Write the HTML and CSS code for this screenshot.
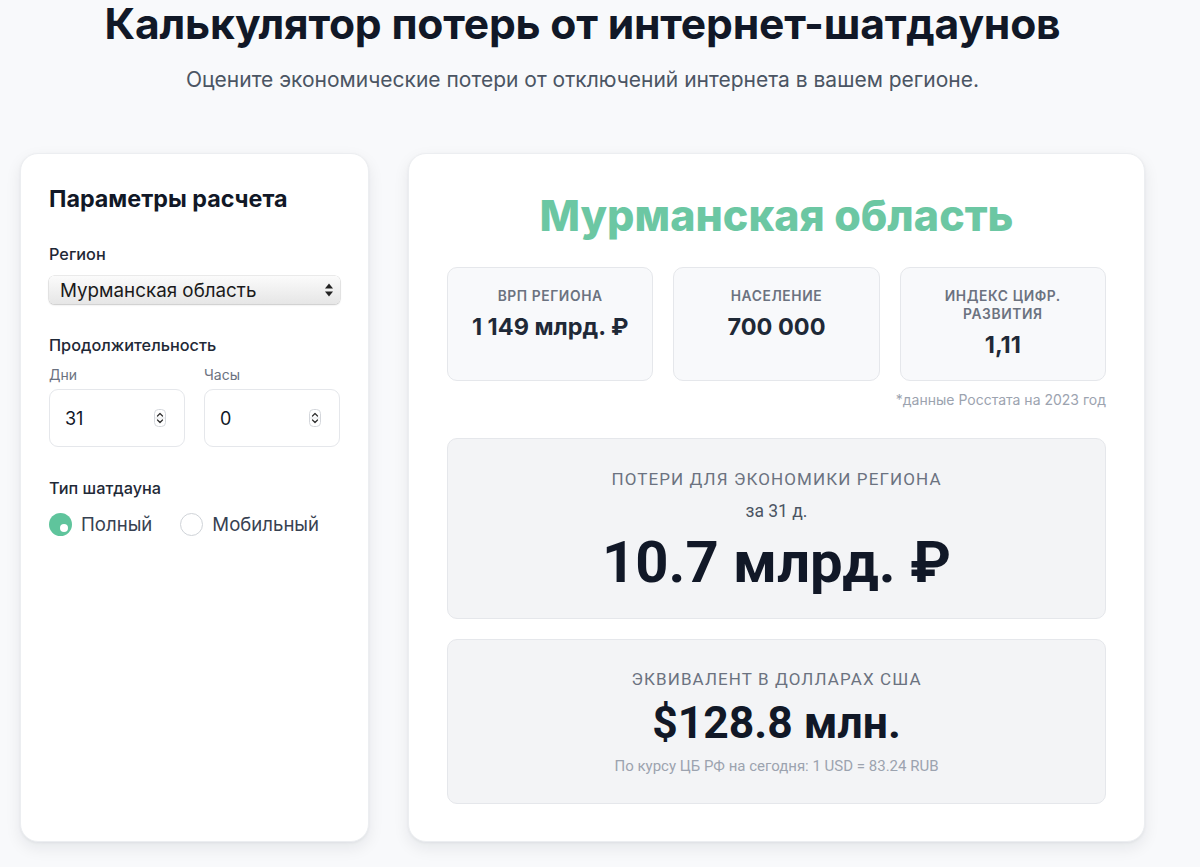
FILE: index.html
```html
<!DOCTYPE html>
<html lang="ru">
<head>
<meta charset="utf-8">
<title>Калькулятор потерь от интернет-шатдаунов</title>
<link rel="stylesheet" href="styles.css">
</head>
<body>
<div class="page">
  <header class="hero">
    <h1 class="hero-title">Калькулятор потерь от интернет-шатдаунов</h1>
    <p class="hero-sub">Оцените экономические потери от отключений интернета в вашем регионе.</p>
  </header>
  <main class="layout">
    <section class="card params">
      <h2 class="params-title">Параметры расчета</h2>
      <div class="field">
        <div class="field-label">Регион</div>
        <div class="select-wrap">
          <div class="select">Мурманская область</div>
          <svg class="select-arrows" width="10" height="16" viewBox="0 0 10 16"><path d="M5 1.5 L9 6.5 H1 Z" fill="#222"/><path d="M5 14.5 L9 9.5 H1 Z" fill="#222"/></svg>
        </div>
      </div>
      <div class="field">
        <div class="field-label">Продолжительность</div>
        <div class="duration">
          <div class="dur-col">
            <div class="sub-label">Дни</div>
            <div class="num-input"><span>31</span>
              <svg class="spin" width="12" height="18" viewBox="0 0 12 18"><rect x="0.5" y="0.5" width="11" height="17" rx="4" fill="#fff" stroke="#d4d7dc"/><path d="M3.5 7 L6 4.5 L8.5 7" fill="none" stroke="#333" stroke-width="1.3" stroke-linecap="round" stroke-linejoin="round"/><path d="M3.5 11 L6 13.5 L8.5 11" fill="none" stroke="#333" stroke-width="1.3" stroke-linecap="round" stroke-linejoin="round"/><line x1="1" y1="9" x2="11" y2="9" stroke="#e3e5e8"/></svg>
            </div>
          </div>
          <div class="dur-col">
            <div class="sub-label">Часы</div>
            <div class="num-input"><span>0</span>
              <svg class="spin" width="12" height="18" viewBox="0 0 12 18"><rect x="0.5" y="0.5" width="11" height="17" rx="4" fill="#fff" stroke="#d4d7dc"/><path d="M3.5 7 L6 4.5 L8.5 7" fill="none" stroke="#333" stroke-width="1.3" stroke-linecap="round" stroke-linejoin="round"/><path d="M3.5 11 L6 13.5 L8.5 11" fill="none" stroke="#333" stroke-width="1.3" stroke-linecap="round" stroke-linejoin="round"/><line x1="1" y1="9" x2="11" y2="9" stroke="#e3e5e8"/></svg>
            </div>
          </div>
        </div>
      </div>
      <div class="field">
        <div class="field-label">Тип шатдауна</div>
        <div class="radios">
          <div class="radio"><span class="radio-dot on"></span><span>Полный</span></div>
          <div class="radio"><span class="radio-dot"></span><span>Мобильный</span></div>
        </div>
      </div>
    </section>
    <section class="card results">
      <h2 class="region-title">Мурманская область</h2>
      <div class="stats">
        <div class="stat">
          <div class="stat-label">ВРП региона</div>
          <div class="stat-value">1 149 млрд. ₽</div>
        </div>
        <div class="stat">
          <div class="stat-label">Население</div>
          <div class="stat-value">700 000</div>
        </div>
        <div class="stat">
          <div class="stat-label">Индекс цифр. развития</div>
          <div class="stat-value">1,11</div>
        </div>
      </div>
      <div class="source">*данные Росстата на 2023 год</div>
      <div class="box loss">
        <div class="box-label">Потери для экономики региона</div>
        <div class="box-period">за 31 д.</div>
        <div class="box-value big">10.7 млрд. ₽</div>
      </div>
      <div class="box usd">
        <div class="box-label">Эквивалент в долларах США</div>
        <div class="box-value mid">$128.8 млн.</div>
        <div class="box-note">По курсу ЦБ РФ на сегодня: 1 USD = 83.24 RUB</div>
      </div>
    </section>
  </main>
</div>
</body>
</html>
```

FILE: styles.css
```css
* { box-sizing: border-box; }
html, body { margin: 0; padding: 0; }
body {
  background: #f8f9fb;
  font-family: Inter, "Noto Sans", "Liberation Sans", sans-serif;
  color: #111827;
  height: 867px;
  overflow: hidden;
}
.page {
  width: 1125px;
  margin-left: 20px;
}
.hero { text-align: center; }
.hero-title {
  margin: 0;
  font-size: 42.6px;
  line-height: 48px;
  font-weight: 700;
  color: #111827;
  letter-spacing: -0.2px;
}
.hero-sub {
  margin: 18px 0 0;
  font-size: 21px;
  line-height: 28px;
  color: #4b5563;
}
.layout {
  margin-top: 59px;
  display: grid;
  grid-template-columns: 349px 1fr;
  gap: 39px;
  height: 689px;
}
.card {
  background: #fff;
  border-radius: 18px;
  border: 1px solid #eceef1;
  box-shadow: 0 6px 16px rgba(15, 23, 42, 0.08), 0 1px 3px rgba(15, 23, 42, 0.05);
}
.params { padding: 31px 28px; }
.params-title {
  margin: 0;
  font-size: 23.3px;
  line-height: 28px;
  font-weight: 700;
  color: #111827;
}
.field { margin-top: 29px; }
.field-label {
  font-size: 16.3px;
  line-height: 24px;
  font-weight: 500;
  color: #1f2937;
}
.select-wrap {
  position: relative;
  margin-top: 10px;
}
.select {
  height: 28px;
  border-radius: 5px;
  background: linear-gradient(#fbfbfb, #e6e6e6);
  box-shadow: 0 0 0 0.5px rgba(0,0,0,0.15), 0 1px 2px rgba(0,0,0,0.15);
  font-size: 18.8px;
  line-height: 29px;
  padding-left: 11px;
  color: #1a1a1a;
}
.select-arrows {
  position: absolute;
  right: 6px;
  top: 6px;
}
.duration {
  margin-top: 8px;
  display: grid;
  grid-template-columns: 1fr 1fr;
  gap: 19px;
}
.sub-label {
  font-size: 14px;
  line-height: 20px;
  color: #6b7280;
}
.num-input {
  margin-top: 4px;
  height: 58px;
  border: 1px solid #e5e7eb;
  border-radius: 9px;
  display: flex;
  align-items: center;
  justify-content: space-between;
  padding: 0 18px 0 15px;
  font-size: 18px;
  color: #111827;
}
.radios {
  margin-top: 12px;
  display: flex;
  gap: 28px;
}
.radio {
  display: flex;
  align-items: center;
  gap: 9px;
  font-size: 18.6px;
  line-height: 24px;
  color: #374151;
}
.radio-dot {
  width: 23px;
  height: 23px;
  border-radius: 50%;
  border: 1.5px solid #cfd3d8;
  background: #fff;
  position: relative;
}
.radio-dot.on {
  border: none;
  background: #5fc49c;
}
.radio-dot.on::after {
  content: "";
  position: absolute;
  width: 8px;
  height: 8px;
  border-radius: 50%;
  background: #fff;
  left: 11px;
  top: 11px;
}
.results { padding: 37px 38px; }
.region-title {
  margin: 0;
  text-align: center;
  font-size: 43px;
  line-height: 48px;
  font-weight: 800;
  color: #6cc7a3;
}
.stats {
  margin-top: 28px;
  display: grid;
  grid-template-columns: repeat(3, 1fr);
  gap: 20px;
}
.stat {
  background: #f8f9fb;
  border: 1px solid #e5e7eb;
  border-radius: 10px;
  padding: 19px 14px;
  text-align: center;
  min-height: 114px;
}
.stat-label {
  font-size: 13.8px;
  line-height: 18px;
  font-weight: 600;
  color: #6b7280;
  text-transform: uppercase;
  letter-spacing: 0.6px;
}
.stat-value {
  margin-top: 8px;
  font-size: 23.5px;
  line-height: 28px;
  font-weight: 700;
  color: #1f2937;
}
.source {
  margin-top: 10px;
  text-align: right;
  font-size: 14px;
  line-height: 18px;
  color: #9ca3af;
}
.box {
  background: #f3f4f6;
  border: 1px solid #e5e7eb;
  border-radius: 10px;
  text-align: center;
  font-family: Roboto, Inter, sans-serif;
}
.loss {
  margin-top: 29px;
  padding: 28px 20px 24px;
}
.usd {
  margin-top: 20px;
  padding: 27px 20px 28px;
}
.box-label {
  font-size: 17px;
  line-height: 24px;
  color: #6b7280;
  text-transform: uppercase;
  letter-spacing: 1.1px;
}
.box-period {
  margin-top: 8px;
  font-size: 17.5px;
  line-height: 24px;
  color: #4b5563;
}
.box-value {
  font-weight: 700;
  color: #111827;
}
.box-value.big {
  margin-top: 7px;
  font-size: 58px;
  line-height: 64px;
}
.box-value.mid {
  margin-top: 8px;
  font-size: 44.5px;
  line-height: 48px;
}
.box-note {
  margin-top: 10px;
  font-size: 15px;
  line-height: 18px;
  color: #9ca3af;
}
```
